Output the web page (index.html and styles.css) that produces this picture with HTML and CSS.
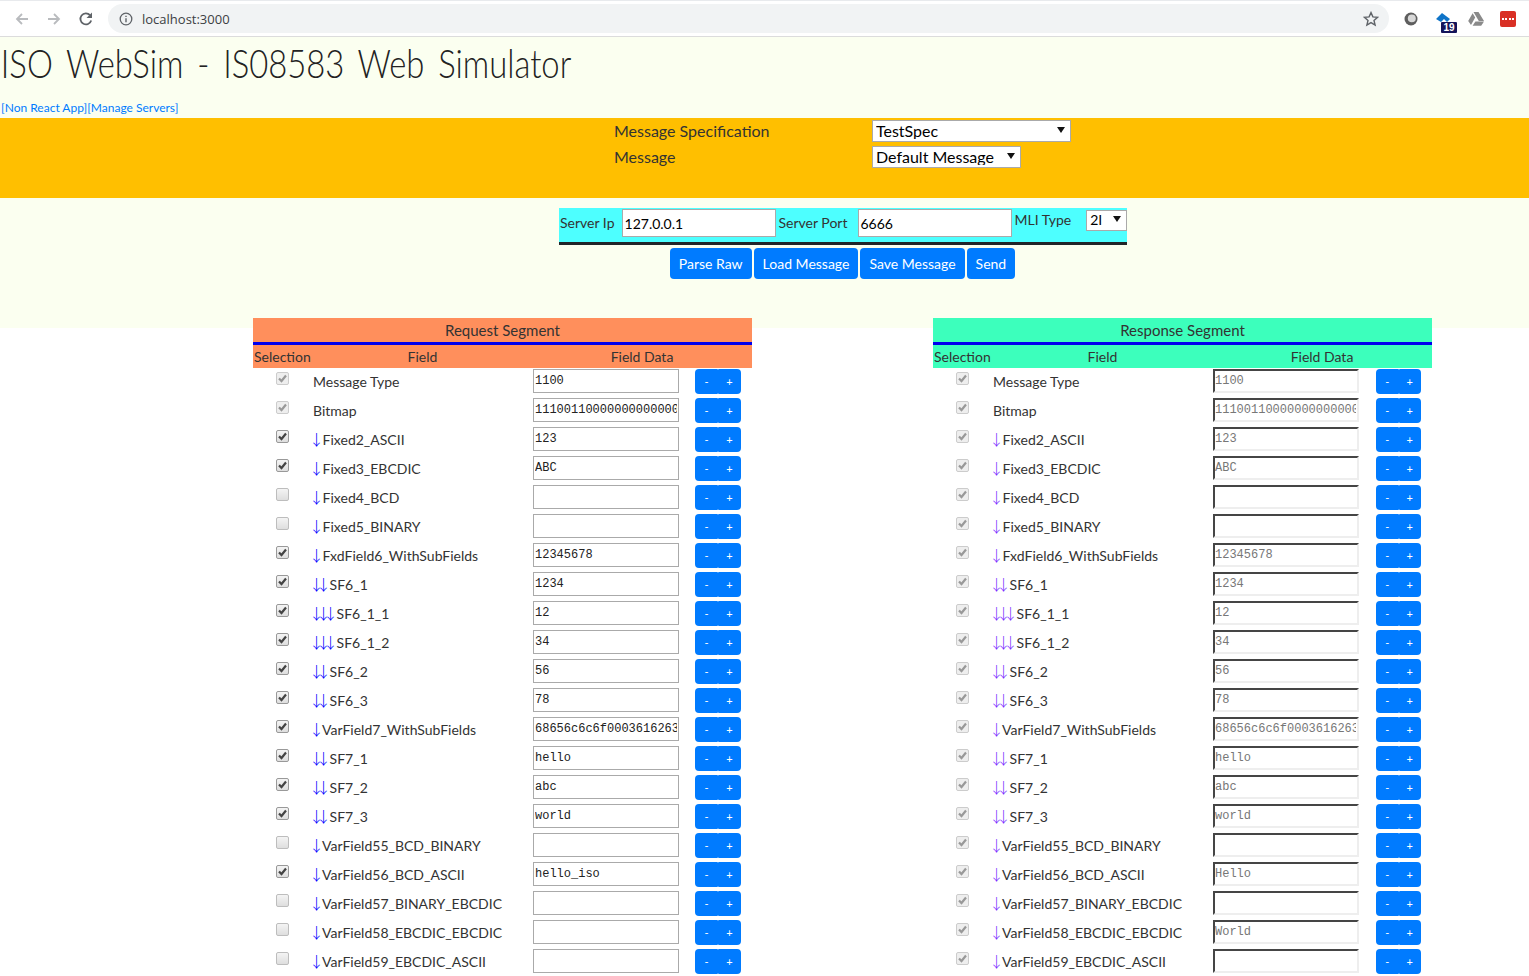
FILE: index.html
```html
<!DOCTYPE html>
<html>
<head>
    <title>ISO WebSim</title>
    <link rel="stylesheet" href="styles.css">
</head>
<body>
    <!-- browser toolbar -->
    <div class="toolbar">
        <svg class="nav-icon" viewBox="0 0 16 16"><path d="M14 8H3M8 3L3 8l5 5" fill="none" stroke="#b9bbbe" stroke-width="1.8"/></svg>
        <svg class="nav-icon" viewBox="0 0 16 16"><path d="M2 8h11M8 3l5 5-5 5" fill="none" stroke="#b9bbbe" stroke-width="1.8"/></svg>
        <svg class="nav-icon" viewBox="0 0 16 16"><path d="M13.2 9.5A5.5 5.5 0 1 1 12 4.2" fill="none" stroke="#5f6368" stroke-width="1.8"/><path d="M14 1.5V7H8.5z" fill="#5f6368"/></svg>
        <div class="omnibox">
            <svg class="info-icon" viewBox="0 0 14 14"><circle cx="7" cy="7" r="5.8" fill="none" stroke="#5f6368" stroke-width="1.3"/><path d="M7 6.2v4M7 3.8v1.3" stroke="#5f6368" stroke-width="1.4"/></svg>
            <span class="url">localhost:3000</span>
            <svg class="star-icon" viewBox="0 0 16 16"><path d="M8 1.6l1.9 4.3 4.7.4-3.6 3.1 1.1 4.6L8 11.6l-4.1 2.4L5 9.4 1.4 6.3l4.7-.4z" fill="none" stroke="#5f6368" stroke-width="1.4"/></svg>
        </div>
        <div class="extensions">
            <svg class="ext-icon" viewBox="0 0 16 16"><circle cx="8" cy="8" r="6.5" fill="#5e5e5e"/><ellipse cx="8.800" cy="7.400" rx="4" ry="3.800" fill="#d8d8d8"/></svg>
            <div class="ext-tag">
                <svg class="ext-icon" viewBox="0 0 16 16"><path d="M0 8l6-6 8 6-3 3-3-3-3 3z" fill="#0f74c8"/></svg>
                <span class="ext-badge">19</span>
            </div>
            <svg class="ext-icon" viewBox="0 0 16 16"><path d="M5.500 1h5l5.500 9h-5.200zM4.600 2.200l2.600 4.400L3 14 .2 10zM4.600 14.800l2.800-4.300H16l-2.800 4.300z" fill="#8a8a8a"/></svg>
            <div class="ext-red"><span class="ext-dots"></span></div>
        </div>
    </div>

    <div class="page-head">
        <h1 class="title">ISO WebSim - IS08583 Web Simulator</h1>
        <div class="head-links"><a href="#">[Non React App]</a><a href="#">[Manage Servers]</a></div>
    </div>

    <div class="spec-band">
        <div class="spec-row">
            <label class="spec-label">Message Specification</label>
            <select class="spec-select wide"><option>TestSpec</option></select>
        </div>
        <div class="spec-row">
            <label class="spec-label">Message</label>
            <select class="spec-select narrow"><option>Default Message</option></select>
        </div>
    </div>

    <div class="server-band">
        <div class="server-bar">
            <label class="server-label">Server Ip</label>
            <input class="server-input ip" type="text" value="127.0.0.1">
            <label class="server-label">Server Port</label>
            <input class="server-input port" type="text" value="6666">
            <label class="server-label mli">MLI Type</label>
            <select class="mli-select"><option>2I</option></select>
        </div>
        <div class="actions">
            <button class="btn">Parse Raw</button>
            <button class="btn">Load Message</button>
            <button class="btn">Save Message</button>
            <button class="btn">Send</button>
        </div>
    </div>

    <div class="segments">
        <!-- request -->
        <div class="segment request">
            <div class="seg-title">Request Segment</div>
            <div class="seg-head"><span>Selection</span><span>Field</span><span>Field Data</span></div>
            <div class="row"><input class="chk" type="checkbox" checked disabled><span class="fname">Message Type</span><input class="val" type="text" value="1100"><span class="pm"><button>-</button><button>+</button></span></div>
            <div class="row"><input class="chk" type="checkbox" checked disabled><span class="fname">Bitmap</span><input class="val" type="text" value="1110011000000000000000"><span class="pm"><button>-</button><button>+</button></span></div>
            <div class="row"><input class="chk" type="checkbox" checked><span class="fname"><i>↓</i> Fixed2_ASCII</span><input class="val" type="text" value="123"><span class="pm"><button>-</button><button>+</button></span></div>
            <div class="row"><input class="chk" type="checkbox" checked><span class="fname"><i>↓</i> Fixed3_EBCDIC</span><input class="val" type="text" value="ABC"><span class="pm"><button>-</button><button>+</button></span></div>
            <div class="row"><input class="chk" type="checkbox"><span class="fname"><i>↓</i> Fixed4_BCD</span><input class="val" type="text"><span class="pm"><button>-</button><button>+</button></span></div>
            <div class="row"><input class="chk" type="checkbox"><span class="fname"><i>↓</i> Fixed5_BINARY</span><input class="val" type="text"><span class="pm"><button>-</button><button>+</button></span></div>
            <div class="row"><input class="chk" type="checkbox" checked><span class="fname"><i>↓</i> FxdField6_WithSubFields</span><input class="val" type="text" value="12345678"><span class="pm"><button>-</button><button>+</button></span></div>
            <div class="row"><input class="chk" type="checkbox" checked><span class="fname"><i>↓↓</i> SF6_1</span><input class="val" type="text" value="1234"><span class="pm"><button>-</button><button>+</button></span></div>
            <div class="row"><input class="chk" type="checkbox" checked><span class="fname"><i>↓↓↓</i> SF6_1_1</span><input class="val" type="text" value="12"><span class="pm"><button>-</button><button>+</button></span></div>
            <div class="row"><input class="chk" type="checkbox" checked><span class="fname"><i>↓↓↓</i> SF6_1_2</span><input class="val" type="text" value="34"><span class="pm"><button>-</button><button>+</button></span></div>
            <div class="row"><input class="chk" type="checkbox" checked><span class="fname"><i>↓↓</i> SF6_2</span><input class="val" type="text" value="56"><span class="pm"><button>-</button><button>+</button></span></div>
            <div class="row"><input class="chk" type="checkbox" checked><span class="fname"><i>↓↓</i> SF6_3</span><input class="val" type="text" value="78"><span class="pm"><button>-</button><button>+</button></span></div>
            <div class="row"><input class="chk" type="checkbox" checked><span class="fname"><i>↓</i> VarField7_WithSubFields</span><input class="val" type="text" value="68656c6c6f0003616263"><span class="pm"><button>-</button><button>+</button></span></div>
            <div class="row"><input class="chk" type="checkbox" checked><span class="fname"><i>↓↓</i> SF7_1</span><input class="val" type="text" value="hello"><span class="pm"><button>-</button><button>+</button></span></div>
            <div class="row"><input class="chk" type="checkbox" checked><span class="fname"><i>↓↓</i> SF7_2</span><input class="val" type="text" value="abc"><span class="pm"><button>-</button><button>+</button></span></div>
            <div class="row"><input class="chk" type="checkbox" checked><span class="fname"><i>↓↓</i> SF7_3</span><input class="val" type="text" value="world"><span class="pm"><button>-</button><button>+</button></span></div>
            <div class="row"><input class="chk" type="checkbox"><span class="fname"><i>↓</i> VarField55_BCD_BINARY</span><input class="val" type="text"><span class="pm"><button>-</button><button>+</button></span></div>
            <div class="row"><input class="chk" type="checkbox" checked><span class="fname"><i>↓</i> VarField56_BCD_ASCII</span><input class="val" type="text" value="hello_iso"><span class="pm"><button>-</button><button>+</button></span></div>
            <div class="row"><input class="chk" type="checkbox"><span class="fname"><i>↓</i> VarField57_BINARY_EBCDIC</span><input class="val" type="text"><span class="pm"><button>-</button><button>+</button></span></div>
            <div class="row"><input class="chk" type="checkbox"><span class="fname"><i>↓</i> VarField58_EBCDIC_EBCDIC</span><input class="val" type="text"><span class="pm"><button>-</button><button>+</button></span></div>
            <div class="row"><input class="chk" type="checkbox"><span class="fname"><i>↓</i> VarField59_EBCDIC_ASCII</span><input class="val" type="text"><span class="pm"><button>-</button><button>+</button></span></div>
        </div>

        <!-- response -->
        <div class="segment response">
            <div class="seg-title">Response Segment</div>
            <div class="seg-head"><span>Selection</span><span>Field</span><span>Field Data</span></div>
            <div class="row"><input class="chk" type="checkbox" checked disabled><span class="fname">Message Type</span><input class="val" type="text" value="1100" disabled><span class="pm"><button>-</button><button>+</button></span></div>
            <div class="row"><input class="chk" type="checkbox" checked disabled><span class="fname">Bitmap</span><input class="val" type="text" value="1110011000000000000000" disabled><span class="pm"><button>-</button><button>+</button></span></div>
            <div class="row"><input class="chk" type="checkbox" checked disabled><span class="fname"><i>↓</i> Fixed2_ASCII</span><input class="val" type="text" value="123" disabled><span class="pm"><button>-</button><button>+</button></span></div>
            <div class="row"><input class="chk" type="checkbox" checked disabled><span class="fname"><i>↓</i> Fixed3_EBCDIC</span><input class="val" type="text" value="ABC" disabled><span class="pm"><button>-</button><button>+</button></span></div>
            <div class="row"><input class="chk" type="checkbox" checked disabled><span class="fname"><i>↓</i> Fixed4_BCD</span><input class="val" type="text" disabled><span class="pm"><button>-</button><button>+</button></span></div>
            <div class="row"><input class="chk" type="checkbox" checked disabled><span class="fname"><i>↓</i> Fixed5_BINARY</span><input class="val" type="text" disabled><span class="pm"><button>-</button><button>+</button></span></div>
            <div class="row"><input class="chk" type="checkbox" checked disabled><span class="fname"><i>↓</i> FxdField6_WithSubFields</span><input class="val" type="text" value="12345678" disabled><span class="pm"><button>-</button><button>+</button></span></div>
            <div class="row"><input class="chk" type="checkbox" checked disabled><span class="fname"><i>↓↓</i> SF6_1</span><input class="val" type="text" value="1234" disabled><span class="pm"><button>-</button><button>+</button></span></div>
            <div class="row"><input class="chk" type="checkbox" checked disabled><span class="fname"><i>↓↓↓</i> SF6_1_1</span><input class="val" type="text" value="12" disabled><span class="pm"><button>-</button><button>+</button></span></div>
            <div class="row"><input class="chk" type="checkbox" checked disabled><span class="fname"><i>↓↓↓</i> SF6_1_2</span><input class="val" type="text" value="34" disabled><span class="pm"><button>-</button><button>+</button></span></div>
            <div class="row"><input class="chk" type="checkbox" checked disabled><span class="fname"><i>↓↓</i> SF6_2</span><input class="val" type="text" value="56" disabled><span class="pm"><button>-</button><button>+</button></span></div>
            <div class="row"><input class="chk" type="checkbox" checked disabled><span class="fname"><i>↓↓</i> SF6_3</span><input class="val" type="text" value="78" disabled><span class="pm"><button>-</button><button>+</button></span></div>
            <div class="row"><input class="chk" type="checkbox" checked disabled><span class="fname"><i>↓</i> VarField7_WithSubFields</span><input class="val" type="text" value="68656c6c6f0003616263" disabled><span class="pm"><button>-</button><button>+</button></span></div>
            <div class="row"><input class="chk" type="checkbox" checked disabled><span class="fname"><i>↓↓</i> SF7_1</span><input class="val" type="text" value="hello" disabled><span class="pm"><button>-</button><button>+</button></span></div>
            <div class="row"><input class="chk" type="checkbox" checked disabled><span class="fname"><i>↓↓</i> SF7_2</span><input class="val" type="text" value="abc" disabled><span class="pm"><button>-</button><button>+</button></span></div>
            <div class="row"><input class="chk" type="checkbox" checked disabled><span class="fname"><i>↓↓</i> SF7_3</span><input class="val" type="text" value="world" disabled><span class="pm"><button>-</button><button>+</button></span></div>
            <div class="row"><input class="chk" type="checkbox" checked disabled><span class="fname"><i>↓</i> VarField55_BCD_BINARY</span><input class="val" type="text" disabled><span class="pm"><button>-</button><button>+</button></span></div>
            <div class="row"><input class="chk" type="checkbox" checked disabled><span class="fname"><i>↓</i> VarField56_BCD_ASCII</span><input class="val" type="text" value="Hello" disabled><span class="pm"><button>-</button><button>+</button></span></div>
            <div class="row"><input class="chk" type="checkbox" checked disabled><span class="fname"><i>↓</i> VarField57_BINARY_EBCDIC</span><input class="val" type="text" disabled><span class="pm"><button>-</button><button>+</button></span></div>
            <div class="row"><input class="chk" type="checkbox" checked disabled><span class="fname"><i>↓</i> VarField58_EBCDIC_EBCDIC</span><input class="val" type="text" value="World" disabled><span class="pm"><button>-</button><button>+</button></span></div>
            <div class="row"><input class="chk" type="checkbox" checked disabled><span class="fname"><i>↓</i> VarField59_EBCDIC_ASCII</span><input class="val" type="text" disabled><span class="pm"><button>-</button><button>+</button></span></div>
        </div>
    </div>
</body>
</html>
```

FILE: styles.css
```css
html {
    height: 976px;
    overflow: hidden;
}
body {
    margin: 0;
    font-family: Lato, "Open Sans", sans-serif;
    font-size: 14px;
    color: #333;
    background-color: #fff;
}

/* browser toolbar */
.toolbar {
    display: flex;
    align-items: center;
    height: 37px;
    box-sizing: border-box;
    padding: 0 12px 0 14px;
    background-color: #fff;
    border-top: 1px solid #e8eaed;
    border-bottom: 1px solid #dcdcdc;
}
.nav-icon {
    width: 16px;
    height: 16px;
    margin-right: 16px;
}
.omnibox {
    display: flex;
    align-items: center;
    flex: 0 0 1281px;
    height: 29px;
    margin-left: -2px;
    padding: 0 10px 0 11px;
    box-sizing: border-box;
    background-color: #f1f3f4;
    border-radius: 15px;
}
.info-icon {
    width: 14px;
    height: 14px;
    margin-right: 9px;
}
.url {
    flex: 1;
    font-family: "Open Sans", sans-serif;
    font-size: 13px;
    color: #3c4043;
}
.star-icon {
    width: 16px;
    height: 16px;
}
.extensions {
    display: flex;
    align-items: center;
    gap: 16px;
    margin-left: 14px;
}
.ext-icon {
    display: block;
    width: 16px;
    height: 16px;
}
.ext-tag {
    position: relative;
    margin-left: 1px;
}
.ext-badge {
    position: absolute;
    left: 5px;
    top: 11px;
    width: 16px;
    font-family: "Liberation Sans", sans-serif;
    font-size: 10px;
    font-weight: bold;
    line-height: 11px;
    text-align: center;
    color: #fff;
    background-color: #14145a;
    border-radius: 1px;
}
.ext-red {
    display: flex;
    align-items: center;
    justify-content: center;
    width: 16px;
    height: 16px;
    background-color: #d93025;
    border-radius: 2px;
}
.ext-dots {
    width: 12px;
    border-top: 2px dotted #fff;
}

/* page head */
.page-head {
    height: 81px;
    background-color: #fbfff0;
    overflow: hidden;
}
.title {
    margin: 0;
    height: 63px;
    padding-left: 1px;
    font-size: 40px;
    font-weight: 300;
    line-height: 52px;
    word-spacing: 6px;
    color: #222;
    white-space: nowrap;
    transform: scaleX(0.82);
    transform-origin: left;
}
.head-links {
    padding-left: 1px;
    font-size: 12px;
    line-height: 16px;
}
.head-links a {
    color: #007bff;
    text-decoration: none;
}

/* spec selector */
.spec-band {
    height: 80px;
    box-sizing: border-box;
    padding: 2px 0 0 614px;
    background-color: #ffbf00;
}
.spec-row {
    display: flex;
    align-items: center;
    height: 22px;
    margin-bottom: 4px;
}
.spec-label {
    width: 258px;
    margin-top: -2px;
    font-size: 16px;
    color: #333;
}
.spec-select, .mli-select {
    appearance: none;
    height: 22px;
    padding: 0 0 2px 3px;
    font-family: Lato, sans-serif;
    font-size: 16px;
    color: #000;
    border: 1px solid #aaa;
    border-radius: 0;
    background: #fff url("data:image/svg+xml,%3Csvg xmlns='http://www.w3.org/2000/svg' width='8' height='6'%3E%3Cpath d='M0 0h8L4 6z' fill='%23111'/%3E%3C/svg%3E") no-repeat right 5px top 6px;
}
.wide {
    width: 199px;
}
.narrow {
    width: 149px;
}

/* server bar */
.server-band {
    height: 130px;
    box-sizing: border-box;
    padding-top: 10px;
    background-color: #fbfff0;
}
.server-bar {
    display: flex;
    align-items: flex-start;
    width: 568px;
    height: 37px;
    box-sizing: border-box;
    margin-left: 559px;
    background-color: #4dffff;
    border-bottom: 3px solid #212529;
}
.server-label {
    margin-top: 6px;
    padding: 0 1px;
    font-size: 14px;
    line-height: 18px;
    white-space: nowrap;
}
.server-label.mli {
    margin: 3px 0 0 1px;
}
.server-input {
    width: 154px;
    height: 28px;
    box-sizing: border-box;
    margin-top: 1px;
    padding: 0 2px;
    font-family: Lato, sans-serif;
    font-size: 14px;
    color: #000;
    border: 1px solid #aaa;
    background-color: #fff;
}
.ip {
    margin-left: 6px;
    margin-right: 2px;
}
.port {
    margin-left: 10px;
    padding-left: 1px;
}
.mli-select {
    width: 41px;
    height: 21px;
    margin: 2px 0 0 14px;
    font-size: 14px;
    background-position: right 5px top 5px;
}
.actions {
    display: flex;
    justify-content: center;
    gap: 2px;
    margin-top: 3px;
    padding-left: 156px;
}
.btn {
    height: 31px;
    padding: 0 9px;
    font-family: Lato, sans-serif;
    font-size: 14px;
    color: #fff;
    background-color: #007bff;
    border: 0;
    border-radius: 4px;
}

/* segments */
.segments {
    display: flex;
    gap: 181px;
    margin-top: -10px;
    padding-left: 253px;
}
.segment {
    width: 499px;
}
.request .seg-title, .request .seg-head {
    background-color: #ff8f5c;
}
.response .seg-title, .response .seg-head {
    background-color: #3cffbc;
}
.seg-title {
    height: 27px;
    box-sizing: border-box;
    padding-top: 2px;
    font-size: 15px;
    line-height: 21px;
    text-align: center;
    border-bottom: 3px solid #0000ee;
}
.seg-head {
    display: grid;
    grid-template-columns: 58px 221px 218px;
    height: 23px;
    padding-left: 1px;
    font-size: 14px;
    line-height: 24px;
}
.seg-head span:nth-child(n+2) {
    text-align: center;
}
.row {
    display: flex;
    align-items: flex-start;
    height: 29px;
    padding-top: 1px;
    box-sizing: border-box;
}
.chk {
    appearance: none;
    flex: none;
    width: 13px;
    height: 13px;
    margin: 3px 0 0 23px;
    border: 1px solid #bdbdbd;
    border-radius: 2px;
    background: linear-gradient(#f4f4f4, #dedede);
}
.chk:checked {
    background: url("data:image/svg+xml,%3Csvg xmlns='http://www.w3.org/2000/svg' width='11' height='11'%3E%3Cpath d='M2 5.500l2.500 2.500L9 2.500' fill='none' stroke='%23444' stroke-width='2.200'/%3E%3C/svg%3E") center no-repeat, linear-gradient(#f4f4f4, #dedede);
    border-color: #999;
}
.chk:disabled {
    background: url("data:image/svg+xml,%3Csvg xmlns='http://www.w3.org/2000/svg' width='11' height='11'%3E%3Cpath d='M2 5.500l2.500 2.500L9 2.500' fill='none' stroke='%23999' stroke-width='2.200'/%3E%3C/svg%3E") center no-repeat, #eee;
    border-color: #ccc;
}
.fname {
    flex: none;
    width: 220px;
    margin-left: 24px;
    font-size: 14px;
    line-height: 26px;
    white-space: nowrap;
}
.fname i {
    margin: 0 3px 0 -4px;
    font-family: "Noto Sans CJK SC", sans-serif;
    font-style: normal;
    font-weight: 300;
    font-size: 15px;
    line-height: 1;
    letter-spacing: -8px;
    color: #0000ff;
}
.response .fname i {
    color: #7b2fff;
}
.val {
    flex: none;
    width: 146px;
    height: 24px;
    box-sizing: border-box;
    padding: 0 1px 1px;
    font-family: "Liberation Mono", monospace;
    font-size: 12px;
    color: #222;
    border: 1px solid #aaa;
    background-color: #fff;
}
.val:disabled {
    color: #777;
    border: 2px inset #eee;
    border-color: #999 #eee #eee #999;
    padding-left: 0;
    background-color: #fff;
}
.pm {
    display: flex;
    flex: none;
    margin-left: 16px;
}
.response .pm {
    margin-left: 17px;
}
.pm button {
    width: 23px;
    height: 25px;
    padding: 0;
    font-family: Lato, sans-serif;
    font-size: 11px;
    color: #fff;
    background-color: #007bff;
    border: 0;
    border-radius: 4px 1px 1px 4px;
}
.pm button + button {
    border-radius: 1px 4px 4px 1px;
}
.response .pm button {
    width: 22.500px;
}
```
